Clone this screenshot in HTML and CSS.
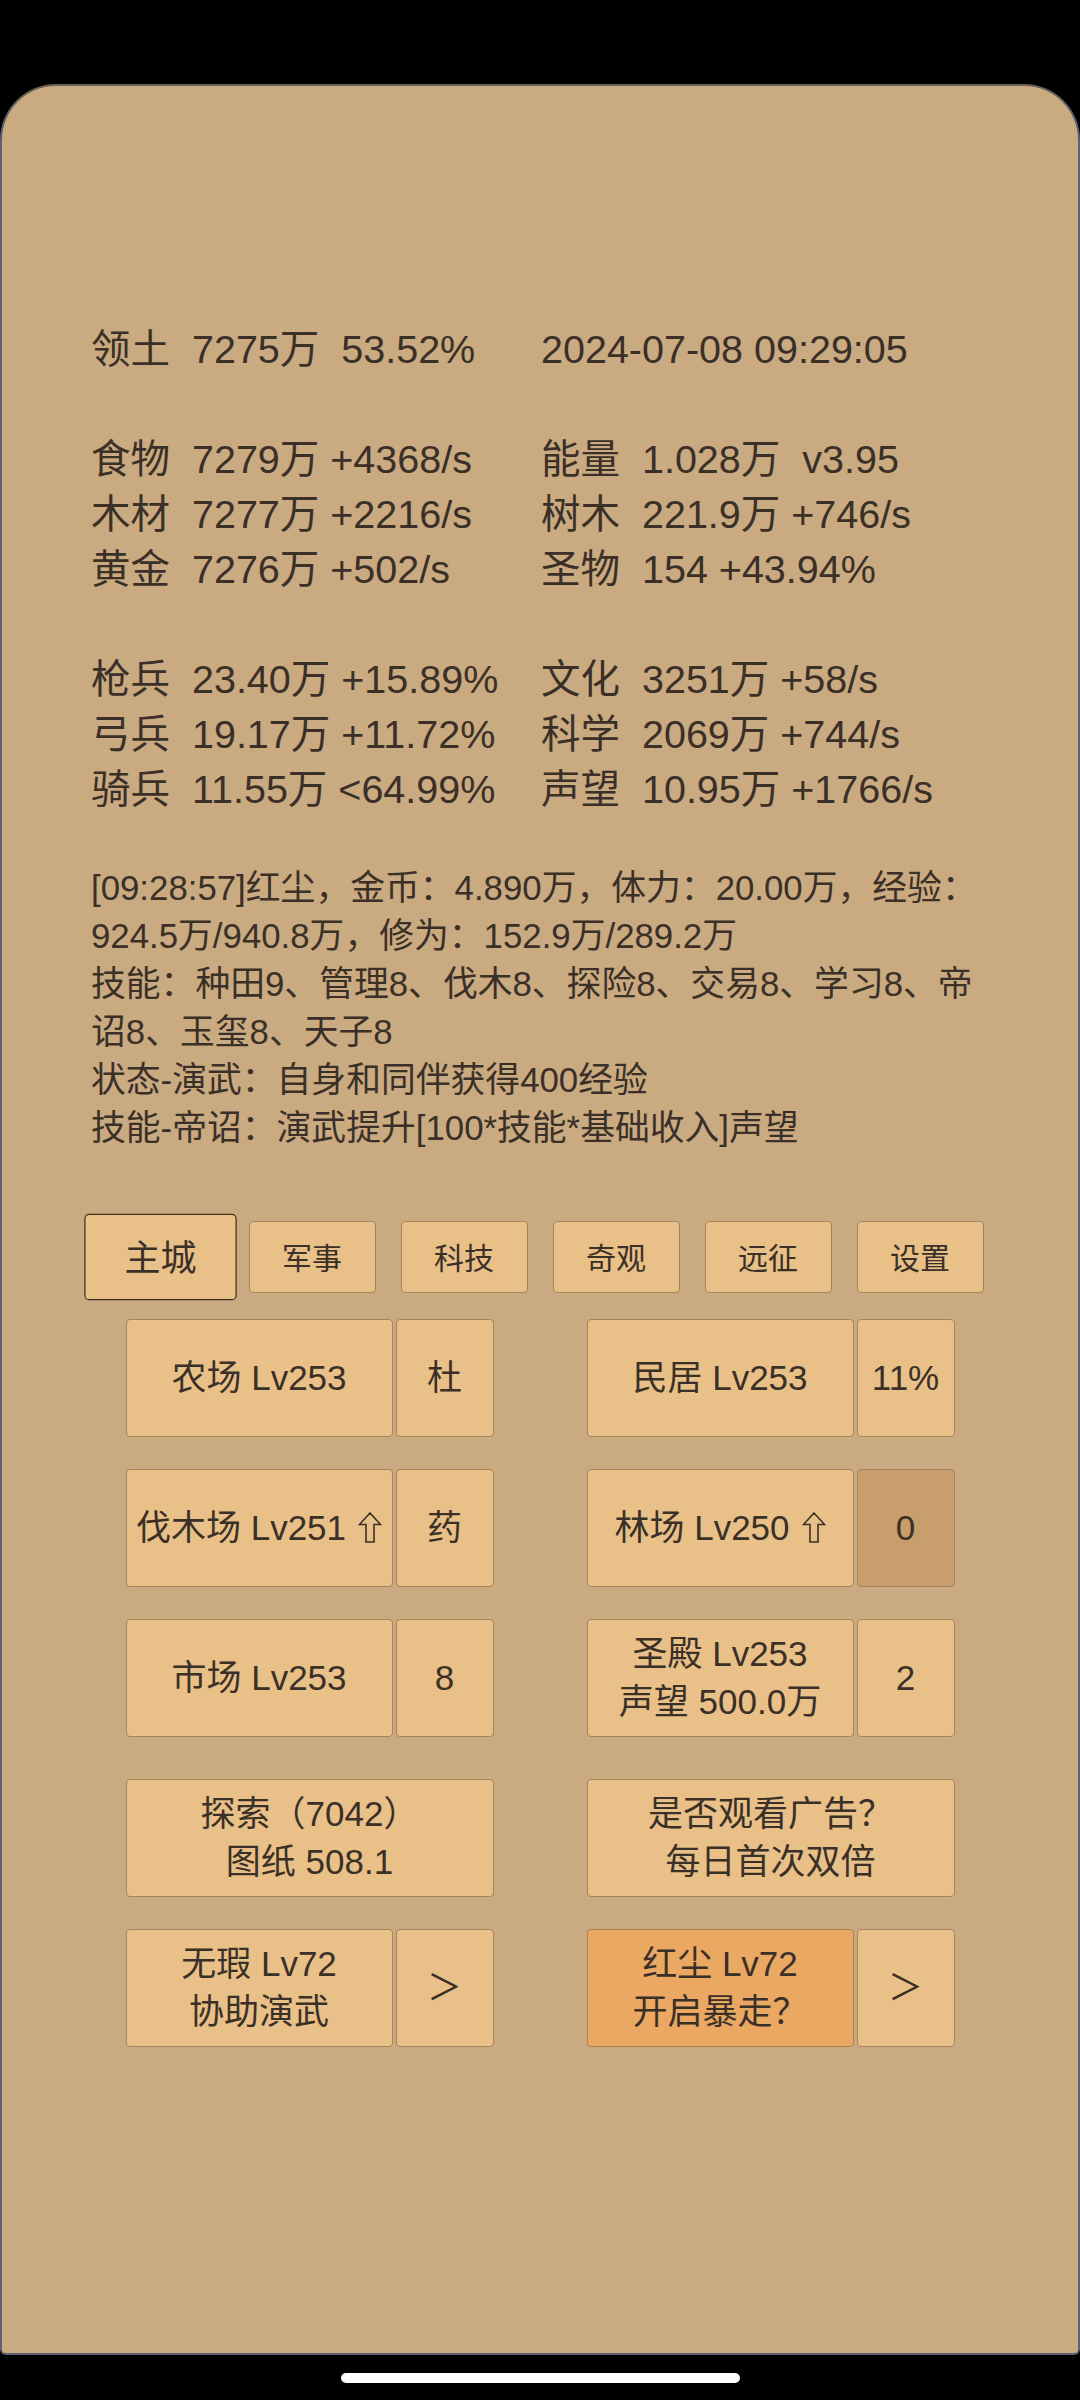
FILE: index.html
```html
<!DOCTYPE html>
<html lang="zh-CN">
<head>
<meta charset="utf-8">
<title>Game</title>
<link rel="stylesheet" href="styles.css">
</head>
<body>
<div class="screen">
  <div class="panel">
    <div class="stats">
      <div class="stat-group">
        <div class="cell">领土  7275万  53.52%</div>
        <div class="cell">2024-07-08 09:29:05</div>
      </div>
      <div class="stat-group">
        <div class="cell">食物  7279万 +4368/s</div>
        <div class="cell">能量  1.028万  v3.95</div>
        <div class="cell">木材  7277万 +2216/s</div>
        <div class="cell">树木  221.9万 +746/s</div>
        <div class="cell">黄金  7276万 +502/s</div>
        <div class="cell">圣物  154 +43.94%</div>
      </div>
      <div class="stat-group">
        <div class="cell">枪兵  23.40万 +15.89%</div>
        <div class="cell">文化  3251万 +58/s</div>
        <div class="cell">弓兵  19.17万 +11.72%</div>
        <div class="cell">科学  2069万 +744/s</div>
        <div class="cell">骑兵  11.55万 &lt;64.99%</div>
        <div class="cell">声望  10.95万 +1766/s</div>
      </div>
    </div>

    <div class="log">
      <div class="log-line">[09:28:57]红尘，金币：4.890万，体力：20.00万，经验：</div>
      <div class="log-line">924.5万/940.8万，修为：152.9万/289.2万</div>
      <div class="log-line">技能：种田9、管理8、伐木8、探险8、交易8、学习8、帝</div>
      <div class="log-line">诏8、玉玺8、天子8</div>
      <div class="log-line">状态-演武：自身和同伴获得400经验</div>
      <div class="log-line">技能-帝诏：演武提升[100*技能*基础收入]声望</div>
    </div>

    <div class="tabs">
      <div class="tab tab-active">主城</div>
      <div class="tab">军事</div>
      <div class="tab">科技</div>
      <div class="tab">奇观</div>
      <div class="tab">远征</div>
      <div class="tab">设置</div>
    </div>

    <div class="grid">
      <div class="row">
        <div class="pair">
          <div class="btn main">农场 Lv253</div>
          <div class="btn side">杜</div>
        </div>
        <div class="pair">
          <div class="btn main">民居 Lv253</div>
          <div class="btn side">11%</div>
        </div>
      </div>
      <div class="row">
        <div class="pair">
          <div class="btn main"><span>伐木场 Lv251<svg class="up" viewBox="0 0 24 31" width="24" height="31"><polygon points="12,1 22.5,12.5 16,12.5 16,30 8,30 8,12.5 1.5,12.5" fill="none" stroke="#3a3027" stroke-width="1.6" stroke-linejoin="miter"/></svg></span></div>
          <div class="btn side">药</div>
        </div>
        <div class="pair">
          <div class="btn main"><span>林场 Lv250<svg class="up" viewBox="0 0 24 31" width="24" height="31"><polygon points="12,1 22.5,12.5 16,12.5 16,30 8,30 8,12.5 1.5,12.5" fill="none" stroke="#3a3027" stroke-width="1.6" stroke-linejoin="miter"/></svg></span></div>
          <div class="btn side btn-dark">0</div>
        </div>
      </div>
      <div class="row">
        <div class="pair">
          <div class="btn main">市场 Lv253</div>
          <div class="btn side">8</div>
        </div>
        <div class="pair">
          <div class="btn main">圣殿 Lv253<br>声望 500.0万</div>
          <div class="btn side">2</div>
        </div>
      </div>
      <div class="row row-sep">
        <div class="pair">
          <div class="btn wide">探索（7042）<br>图纸 508.1</div>
        </div>
        <div class="pair">
          <div class="btn wide">是否观看广告？<br>每日首次双倍</div>
        </div>
      </div>
      <div class="row">
        <div class="pair">
          <div class="btn main">无瑕 Lv72<br>协助演武</div>
          <div class="btn side">＞</div>
        </div>
        <div class="pair">
          <div class="btn main btn-orange">红尘 Lv72<br>开启暴走？</div>
          <div class="btn side">＞</div>
        </div>
      </div>
    </div>
  </div>
  <div class="home-bar"></div>
</div>
</body>
</html>
```

FILE: styles.css
```css
html, body {
  margin: 0;
  padding: 0;
  background: #000;
}

body {
  width: 1080px;
  height: 2400px;
  overflow: hidden;
  font-family: "Liberation Sans", "Noto Sans CJK SC", sans-serif;
  color: #3a3027;
}

.screen {
  display: flex;
  flex-direction: column;
  align-items: center;
  padding-top: 84px;
}

.panel {
  box-sizing: border-box;
  width: 1080px;
  height: 2271px;
  background: #caaa81;
  border: 2px solid #5e6170;
  border-top-color: #6a6258;
  border-radius: 56px 56px 6px 6px;
  padding: 236px 89px 0 89px;
}

.stats {
  font-size: 39.5px;
  line-height: 55px;
}

.stat-group {
  display: grid;
  grid-template-columns: 450px auto;
}

.cell {
  white-space: pre;
  height: 55px;
}

.stat-group + .stat-group {
  margin-top: 55px;
}

.log {
  margin-top: 47px;
  font-size: 34.8px;
  line-height: 48px;
  white-space: nowrap;
}

.tabs {
  margin-top: 69px;
  display: flex;
  justify-content: center;
  gap: 25px;
}

.tab {
  box-sizing: border-box;
  width: 127px;
  height: 72px;
  background: #e9c087;
  border: 1px solid #a5845c;
  border-radius: 4px;
  display: flex;
  align-items: center;
  justify-content: center;
  font-size: 30px;
  padding-bottom: 2px;
}

.tab-active {
  transform: scale(1.2);
  border-color: #3e2e1c;
}

.grid {
  margin-top: 26px;
  display: flex;
  flex-direction: column;
  align-items: center;
  gap: 32px;
}

.row {
  display: flex;
  gap: 93px;
}

.row-sep {
  margin-top: 10px;
}

.pair {
  display: flex;
  gap: 3px;
  width: 368px;
  height: 118px;
}

.btn {
  box-sizing: border-box;
  height: 118px;
  background: #e9c087;
  border: 1px solid #a5845c;
  border-radius: 4px;
  display: flex;
  align-items: center;
  justify-content: center;
  text-align: center;
  font-size: 35px;
  line-height: 48px;
  white-space: nowrap;
}

.main {
  width: 267px;
}

.side {
  width: 98px;
}

.wide {
  width: 368px;
}

.btn-dark {
  background: #c89e6c;
}

.btn-orange {
  background: #eba862;
}

.up {
  margin-left: 12px;
  vertical-align: -3px;
}

.home-bar {
  margin-top: 18px;
  width: 399px;
  height: 10px;
  border-radius: 5px;
  background: #fff;
}
```
